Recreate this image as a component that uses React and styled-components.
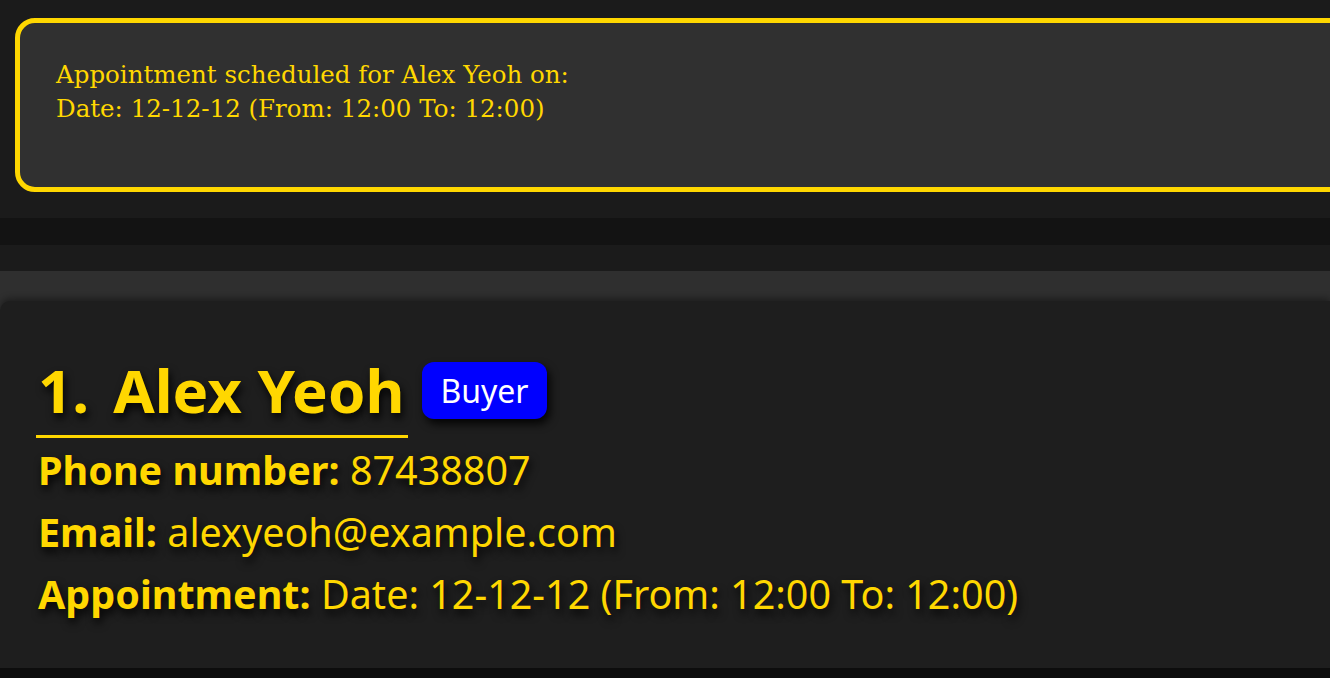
import React from "react";
import styled, { createGlobalStyle } from "styled-components";

const GlobalStyle = createGlobalStyle`
  html, body {
    margin: 0;
    padding: 0;
    background: #1b1b1b;
    overflow: hidden;
  }
`;

const person = {
  index: 1,
  name: "Alex Yeoh",
  tag: "Buyer",
  phone: "87438807",
  email: "alexyeoh@example.com",
  appointment: "Date: 12-12-12 (From: 12:00 To: 12:00)",
};

const App = () => {
  return (
    <>
      <GlobalStyle />
      <Page>
        <ResultPane>
          <ResultBox>
            <ResultText>
              Appointment scheduled for {person.name} on:
              <br />
              {person.appointment}
            </ResultText>
          </ResultBox>
        </ResultPane>
        <Divider />
        <Spacer />
        <ListPane>
          <Card>
            <TitleRow>
              <Name>
                <span className="index">{person.index}.</span>
                {person.name}
              </Name>
              <Tag>{person.tag}</Tag>
            </TitleRow>
            <Field>
              <b>Phone number:</b> {person.phone}
            </Field>
            <Field>
              <b>Email:</b> {person.email}
            </Field>
            <Field>
              <b>Appointment:</b> {person.appointment}
            </Field>
          </Card>
          <BottomStrip />
        </ListPane>
      </Page>
    </>
  );
};

export default App;

const Page = styled.div`
  width: 1330px;
  height: 678px;
  display: flex;
  flex-direction: column;
  overflow: hidden;
`;

const ResultPane = styled.div`
  height: 218px;
  box-sizing: border-box;
  padding: 18px 0 0 15px;
  background: #1b1b1b;
`;

const ResultBox = styled.div`
  box-sizing: border-box;
  width: 1340px;
  height: 174px;
  border: 5px solid #ffd700;
  border-radius: 20px;
  background: #303030;
  padding: 35px 36px;
`;

const ResultText = styled.div`
  font-family: "DejaVu Serif", "Liberation Serif", serif;
  font-size: 24.5px;
  line-height: 34px;
  color: #ffd700;
`;

const Divider = styled.div`
  height: 27px;
  background: #131313;
`;

const Spacer = styled.div`
  height: 26px;
  background: #1b1b1b;
`;

const ListPane = styled.div`
  flex: 1;
  display: flex;
  flex-direction: column;
  background: #2f2f2f;
  padding-top: 30px;
`;

const Card = styled.div`
  flex: 1;
  background: #1e1e1e;
  border-radius: 10px 0 0 0;
  box-shadow: 0 -3px 6px rgba(0, 0, 0, 0.35);
  padding: 56px 0 0 38px;
  font-family: "Noto Sans", "Open Sans", sans-serif;
  color: #ffd700;
  text-shadow: 2px 5px 8px rgba(0, 0, 0, 0.9);
`;

const TitleRow = styled.div`
  display: flex;
  align-items: flex-start;
  gap: 14px;
  margin-bottom: 1px;
`;

const Name = styled.div`
  font-size: 60px;
  font-weight: 700;
  line-height: 66px;
  border-bottom: 3px solid #ffd700;
  margin-left: -2px;
  padding: 0 4px 12px 2px;

  .index {
    margin-right: 24px;
  }
`;

const Tag = styled.div`
  margin-top: 5px;
  background: #0000ff;
  color: #ffffff;
  border-radius: 12px;
  font-size: 32px;
  line-height: 57px;
  padding: 0 18px;
  text-shadow: none;
  box-shadow: 3px 5px 8px rgba(0, 0, 0, 0.85);
`;

const Field = styled.div`
  font-size: 39.5px;
  line-height: 62px;

  b {
    font-weight: 700;
  }
`;

const BottomStrip = styled.div`
  height: 10px;
  background: #0d0d0d;
`;
